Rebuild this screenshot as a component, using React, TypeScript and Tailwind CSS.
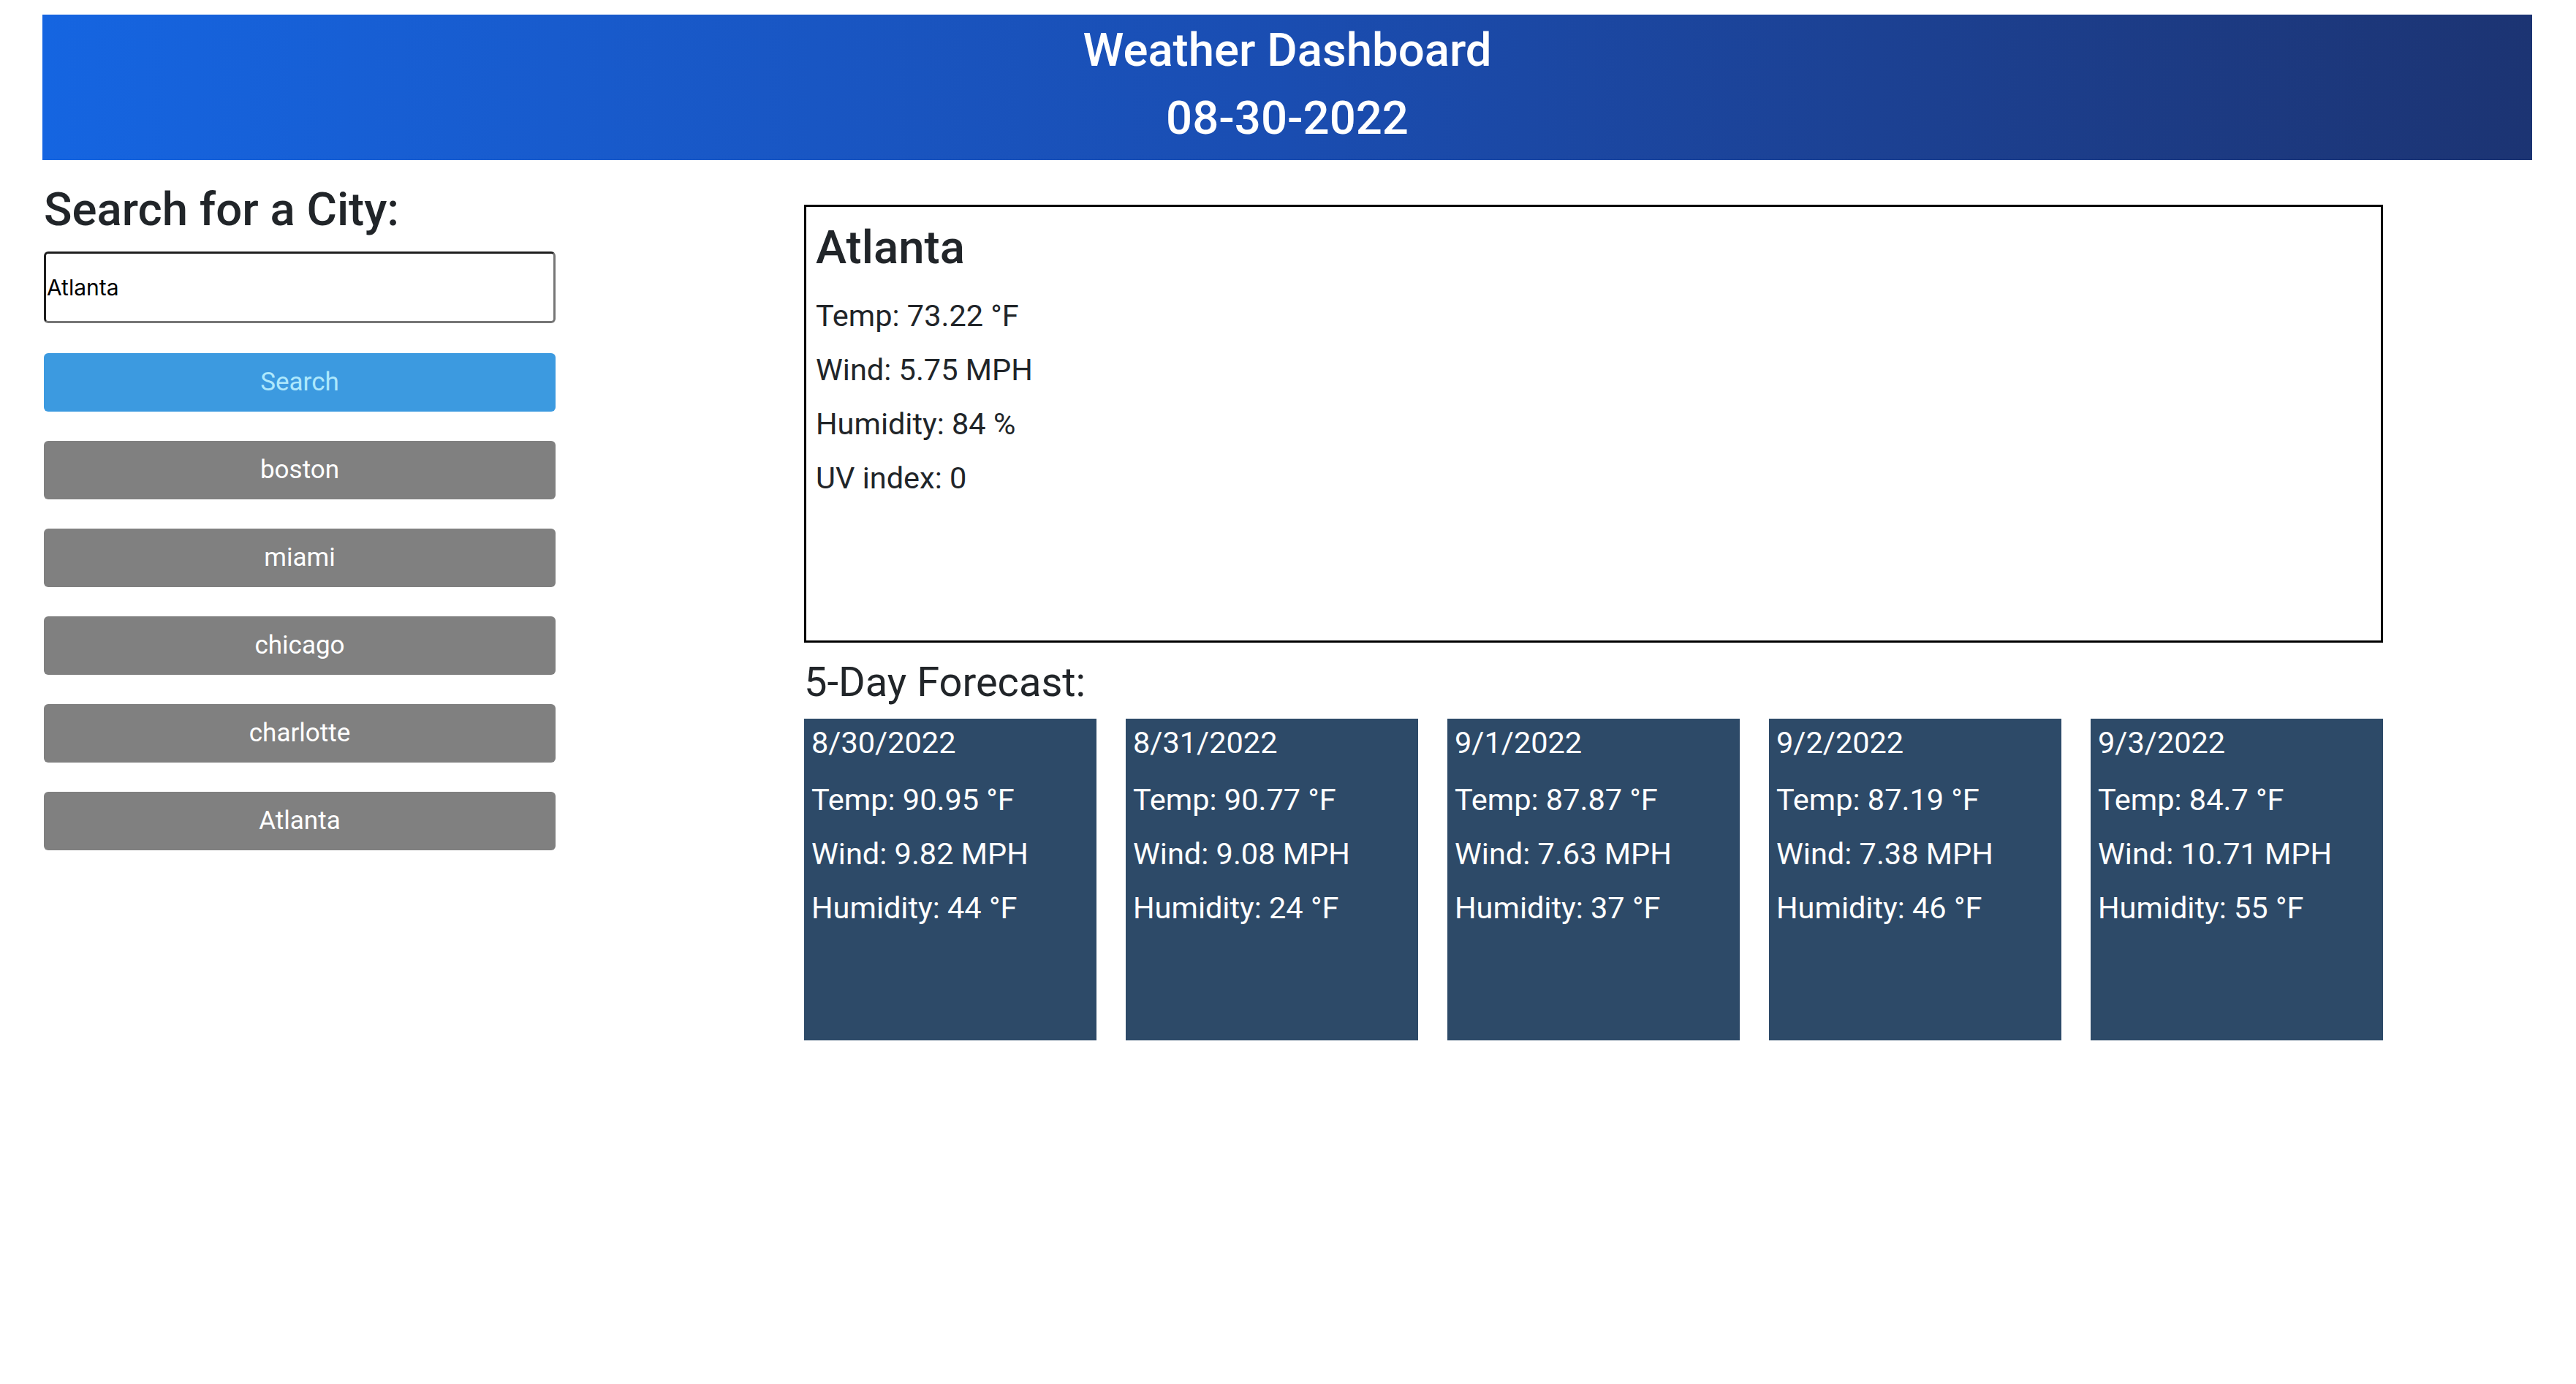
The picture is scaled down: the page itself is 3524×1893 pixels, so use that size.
const history = ['boston', 'miami', 'chicago', 'charlotte', 'Atlanta']

const forecast = [
  { date: '8/30/2022', temp: '90.95', wind: '9.82', humidity: '44' },
  { date: '8/31/2022', temp: '90.77', wind: '9.08', humidity: '24' },
  { date: '9/1/2022', temp: '87.87', wind: '7.63', humidity: '37' },
  { date: '9/2/2022', temp: '87.19', wind: '7.38', humidity: '46' },
  { date: '9/3/2022', temp: '84.7', wind: '10.71', humidity: '55' },
]

function ForecastCard({ day }: { day: (typeof forecast)[number] }) {
  return (
    <div className="h-[440px] w-[400px] bg-[#2d4a68] px-[10px] pt-[9px] text-[41.5px] text-white">
      <p className="leading-[48px]">{day.date}</p>
      <p className="mt-[17px] leading-[74px]">Temp: {day.temp} °F</p>
      <p className="leading-[74px]">Wind: {day.wind} MPH</p>
      <p className="leading-[74px]">Humidity: {day.humidity} °F</p>
    </div>
  )
}

export default function App() {
  return (
    <div className="min-h-screen bg-white pl-[58px] pr-[60px] pt-[20px] font-['Roboto',sans-serif] text-[#212529]">
      <header className="flex h-[199px] flex-col items-center bg-linear-to-r from-[#1565e1] via-[#1a4db1] to-[#1c3473] pt-[2px] text-[63.5px] font-medium leading-[93px] text-white">
        <h1>Weather Dashboard</h1>
        <h2>08-30-2022</h2>
      </header>

      <div className="flex pl-[2px]">
        <aside className="w-[700px] shrink-0 pt-[30px]">
          <h3 className="text-[63.5px] font-medium leading-[76px]">Search for a City:</h3>
          <input
            defaultValue="Atlanta"
            className="mt-[19px] block h-[98px] w-full rounded-[6px] border-[3px] border-t-[#1f1f1f] border-l-[#1f1f1f] border-r-[#767676] border-b-[#767676] bg-white px-[1px] font-['Inter',sans-serif] text-[30px] text-black outline-none"
          />
          <button className="mt-[41px] flex h-[80px] w-full items-center justify-center rounded-[6px] bg-[#3c9ae0] text-[35px] text-[#aee8fc]">
            Search
          </button>
          <div className="mt-[40px] flex flex-col gap-[40px]">
            {history.map((city) => (
              <button
                key={city}
                className="flex h-[80px] w-full items-center justify-center rounded-[6px] bg-[#808080] text-[35px] text-white"
              >
                {city}
              </button>
            ))}
          </div>
        </aside>

        <main className="ml-[340px] w-[2160px] pt-[61px]">
          <section className="h-[599px] border-[3px] border-black pl-[13px] pt-[18px]">
            <h2 className="text-[63.5px] font-medium leading-[76px]">Atlanta</h2>
            <div className="mt-[18px] text-[41.5px] leading-[74px]">
              <p>Temp: 73.22 °F</p>
              <p>Wind: 5.75 MPH</p>
              <p>Humidity: 84 %</p>
              <p>UV index: 0</p>
            </div>
          </section>

          <h4 className="mt-[22px] text-[56px] leading-[65px]">5-Day Forecast:</h4>
          <div className="mt-[17px] flex gap-[40px]">
            {forecast.map((day) => (
              <ForecastCard key={day.date} day={day} />
            ))}
          </div>
        </main>
      </div>
    </div>
  )
}
